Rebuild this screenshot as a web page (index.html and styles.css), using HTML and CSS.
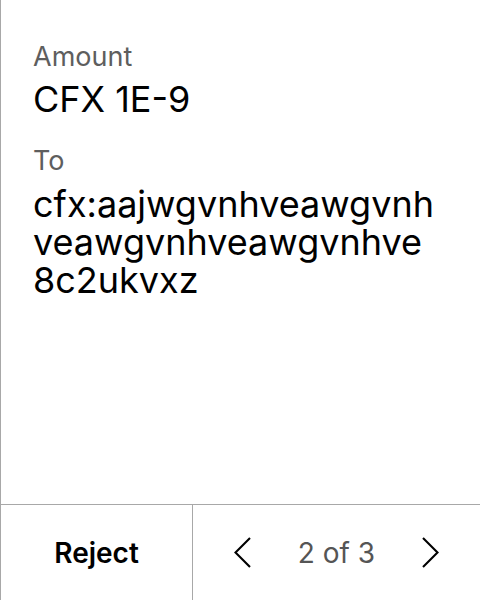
FILE: index.html
```html
<!DOCTYPE html>
<html>
<head>
<meta charset="utf-8">
<link rel="stylesheet" href="styles.css">
</head>
<body>
<div class="screen">
  <main class="content">
    <div class="field">
      <div class="label">Amount</div>
      <div class="value">CFX 1E-9</div>
    </div>
    <div class="field">
      <div class="label">To</div>
      <div class="value address">cfx:aajwgvnhveawgvnh veawgvnhveawgvnhve 8c2ukvxz</div>
    </div>
  </main>
  <footer class="footer">
    <div class="reject">Reject</div>
    <div class="nav">
      <svg class="chev" width="17" height="31" viewBox="0 0 17 31"><polyline points="16,1 1.5,15.5 16,30" fill="none" stroke="#000" stroke-width="2.1"/></svg>
      <span class="pager">2 of 3</span>
      <svg class="chev" width="17" height="31" viewBox="0 0 17 31"><polyline points="1,1 15.5,15.5 1,30" fill="none" stroke="#000" stroke-width="2.1"/></svg>
    </div>
  </footer>
</div>
</body>
</html>
```
FILE: styles.css
```css
html, body {
  margin: 0;
  padding: 0;
  background: #fff;
}
body {
  font-family: Inter, "Noto Sans", sans-serif;
  color: #000;
}
.screen {
  width: 480px;
  height: 600px;
  box-sizing: border-box;
  border-left: 1px solid #a8a8a8;
  display: flex;
  flex-direction: column;
}
.content {
  flex: 1;
  padding: 40px 10px 0 32px;
}
.field + .field {
  margin-top: 23px;
}
.label {
  font-size: 27px;
  line-height: 34px;
  color: #5e5e5e;
}
.value {
  margin-top: 3px;
  font-size: 36px;
  line-height: 44px;
  color: #000;
}
.address {
  margin-top: 7px;
  line-height: 38px;
  width: 430px;
}
.footer {
  height: 95px;
  border-top: 1px solid #a8a8a8;
  display: flex;
}
.reject {
  width: 191px;
  border-right: 1px solid #a8a8a8;
  display: flex;
  align-items: center;
  justify-content: center;
  font-size: 28px;
  font-weight: 600;
}
.nav {
  flex: 1;
  display: flex;
  align-items: center;
  justify-content: center;
  gap: 47px;
}
.pager {
  font-size: 28px;
  color: #555;
}
.chev {
  display: block;
}
```
